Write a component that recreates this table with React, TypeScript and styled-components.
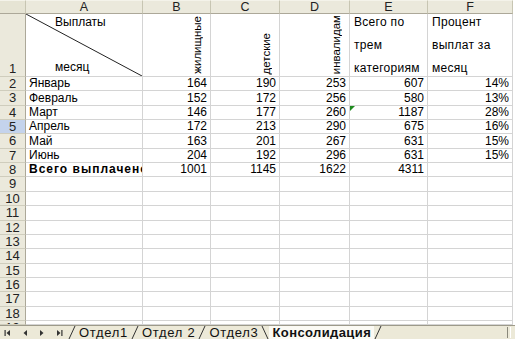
import React from "react";
import styled, { createGlobalStyle, css } from "styled-components";

const Global = createGlobalStyle`
  html, body { margin: 0; padding: 0; background: #ffffff; }
  body { font-family: "Liberation Sans", Arial, sans-serif; }
`;

const Window = styled.div`
  width: 515px;
  height: 339px;
  display: flex;
  flex-direction: column;
  overflow: hidden;
  background: #ffffff;
`;

const rowTops = Array.from({ length: 19 }, (_, i) => 77 + Math.round(i * 14.35));
const rowHeights = rowTops.slice(0, 18).map((t, i) => rowTops[i + 1] - t);
rowHeights[17] = 325 - rowTops[17];

const Sheet = styled.div<{ $rows: string }>`
  display: grid;
  grid-template-columns: 26px 117px 68px 69px 70px 78px 85px 2px;
  grid-template-rows: ${(p) => p.$rows};
  height: 325px;
  overflow: hidden;
  font-size: 12px;
  color: #000;
`;

const ColHead = styled.div<{ $corner?: boolean }>`
  background: #ebe9dc;
  border-right: 1px solid #c7c5b2;
  border-bottom: 1px solid #aca899;
  border-top: 1px solid #f4f3ea;
  box-sizing: border-box;
  display: flex;
  align-items: center;
  justify-content: center;
  font-size: 12.5px;
  color: #222;
  ${(p) => p.$corner && css`background: #e6e4d4;`}
`;

const RowHead = styled.div<{ $selected?: boolean; $bottom?: boolean }>`
  background: ${(p) => (p.$selected ? "#c4d3ec" : "#ebe9dc")};
  border-right: 1px solid #aca899;
  border-bottom: 1px solid #cfcdbd;
  box-sizing: border-box;
  display: flex;
  align-items: ${(p) => (p.$bottom ? "flex-end" : "flex-start")};
  justify-content: center;
  overflow: hidden;
  font-size: 13px;
  color: #222;
  padding: ${(p) => (p.$bottom ? "0 0 1px 0" : "1px 0 0 0")};
  line-height: 12px;
`;

const Cell = styled.div<{ $align?: "left" | "right"; $bold?: boolean }>`
  position: relative;
  border-right: 1px solid #d4d4d4;
  border-bottom: 1px solid #d4d4d4;
  box-sizing: border-box;
  display: flex;
  align-items: center;
  justify-content: ${(p) => (p.$align === "right" ? "flex-end" : "flex-start")};
  padding: 0 3px 0 3px;
  white-space: nowrap;
  overflow: hidden;
  font-weight: ${(p) => (p.$bold ? "bold" : "normal")};
  letter-spacing: ${(p) => (p.$bold ? "1px" : "0")};
  line-height: 13px;
`;

const Edge = styled.div`
  background: #ffffff;
`;

const DiagCell = styled(Cell)`
  display: block;
  padding: 0;
`;

const DiagSvg = styled.svg`
  position: absolute;
  inset: 0;
`;

const DiagTop = styled.span`
  position: absolute;
  left: 29px;
  top: 2px;
`;

const DiagBottom = styled.span`
  position: absolute;
  left: 29px;
  bottom: 2px;
`;

const VertCell = styled(Cell)`
  align-items: flex-end;
  justify-content: flex-end;
  padding: 0 7px 2px 0;
`;

const VertText = styled.span`
  writing-mode: vertical-rl;
  transform: rotate(180deg);
  line-height: 12px;
  font-size: 11.5px;
`;

const StackCell = styled(Cell)`
  flex-direction: column;
  align-items: flex-start;
  justify-content: space-between;
  padding: 2px 3px 1px 4px;
  letter-spacing: 0.3px;
`;

const Marker = styled.span`
  position: absolute;
  left: 0;
  top: 0;
  width: 0;
  height: 0;
  border-top: 5px solid #1f8a1f;
  border-right: 5px solid transparent;
`;

const TabBar = styled.div`
  height: 14px;
  display: flex;
  align-items: center;
  background: #ece9d8;
  border-top: 1px solid #9d9a8a;
  box-sizing: border-box;
  font-size: 13px;
  position: relative;
`;

const NavGroup = styled.div`
  display: flex;
  align-items: center;
  gap: 9px;
  padding-left: 4px;
  width: 64px;
  flex: none;
`;

const Tabs = styled.div`
  display: flex;
  align-items: center;
  height: 100%;
`;

const Tab = styled.div<{ $active?: boolean }>`
  display: flex;
  align-items: center;
  height: 100%;
  padding: 0 3px;
  font-weight: ${(p) => (p.$active ? "bold" : "normal")};
  background: ${(p) => (p.$active ? "#fbfaf4" : "transparent")};
  letter-spacing: ${(p) => (p.$active ? "0.4px" : "0.7px")};
  color: #111;
  line-height: 12px;
  white-space: nowrap;
`;

const Slant = styled.svg`
  display: block;
  flex: none;
`;

const SplitBar = styled.div`
  margin-left: auto;
  margin-right: 4px;
  width: 2px;
  height: 11px;
  border-left: 1px solid #8a887a;
  border-right: 1px solid #ffffff;
`;

const Nav = ({ kind }: { kind: "first" | "prev" | "next" | "last" }) => {
  const left = kind === "first" || kind === "prev";
  const bar = kind === "first" || kind === "last";
  return (
    <svg width="8" height="8" viewBox="0 0 8 8">
      {left ? <polygon points="6,1 6,7 2.5,4" fill="#333" /> : <polygon points="2,1 2,7 5.5,4" fill="#333" />}
      {bar && (left ? <rect x="0.5" y="1" width="1.2" height="6" fill="#333" /> : <rect x="6.3" y="1" width="1.2" height="6" fill="#333" />)}
    </svg>
  );
};

const SlantLine = ({ back }: { back?: boolean }) => (
  <Slant width="8" height="13" viewBox="0 0 8 13">
    {back ? (
      <line x1="1" y1="0" x2="7" y2="13" stroke="#333" strokeWidth="1" />
    ) : (
      <line x1="7" y1="0" x2="1" y2="13" stroke="#333" strokeWidth="1" />
    )}
  </Slant>
);

type Row = { n: number; month: string; b: number; c: number; d: number; e: number; f?: string; bold?: boolean; mark?: boolean };

const data: Row[] = [
  { n: 2, month: "Январь", b: 164, c: 190, d: 253, e: 607, f: "14%" },
  { n: 3, month: "Февраль", b: 152, c: 172, d: 256, e: 580, f: "13%" },
  { n: 4, month: "Март", b: 146, c: 177, d: 260, e: 1187, f: "28%", mark: true },
  { n: 5, month: "Апрель", b: 172, c: 213, d: 290, e: 675, f: "16%" },
  { n: 6, month: "Май", b: 163, c: 201, d: 267, e: 631, f: "15%" },
  { n: 7, month: "Июнь", b: 204, c: 192, d: 296, e: 631, f: "15%" },
  { n: 8, month: "Всего выплачено", b: 1001, c: 1145, d: 1622, e: 4311, bold: true },
];

export default function App() {
  const rows = `14px 63px ${rowHeights.map((h) => `${h}px`).join(" ")}`;
  const empty = Array.from({ length: 11 }, (_, i) => i + 9);
  return (
    <Window>
      <Global />
      <Sheet $rows={rows}>
        <ColHead $corner />
        {["A", "B", "C", "D", "E", "F"].map((l) => (
          <ColHead key={l}>{l}</ColHead>
        ))}
        <Edge />

        <RowHead $bottom>1</RowHead>
        <DiagCell>
          <DiagSvg width="117" height="63" viewBox="0 0 117 63" preserveAspectRatio="none">
            <line x1="0" y1="0" x2="116" y2="62" stroke="#222" strokeWidth="1" />
          </DiagSvg>
          <DiagTop>Выплаты</DiagTop>
          <DiagBottom>месяц</DiagBottom>
        </DiagCell>
        <VertCell>
          <VertText>жилищные</VertText>
        </VertCell>
        <VertCell>
          <VertText>детские</VertText>
        </VertCell>
        <VertCell>
          <VertText>инвалидам</VertText>
        </VertCell>
        <StackCell>
          <span>Всего по</span>
          <span>трем</span>
          <span>категориям</span>
        </StackCell>
        <StackCell>
          <span>Процент</span>
          <span>выплат за</span>
          <span>месяц</span>
        </StackCell>
        <Edge />

        {data.map((r) => (
          <React.Fragment key={r.n}>
            <RowHead $selected={r.n === 5}>{r.n}</RowHead>
            <Cell $bold={r.bold}>{r.month}</Cell>
            <Cell $align="right">{r.b}</Cell>
            <Cell $align="right">{r.c}</Cell>
            <Cell $align="right">{r.d}</Cell>
            <Cell $align="right">
              {r.mark && <Marker />}
              {r.e}
            </Cell>
            <Cell $align="right">{r.f ?? ""}</Cell>
            <Edge />
          </React.Fragment>
        ))}

        {empty.map((n) => (
          <React.Fragment key={n}>
            <RowHead>{n}</RowHead>
            <Cell />
            <Cell />
            <Cell />
            <Cell />
            <Cell />
            <Cell />
            <Edge />
          </React.Fragment>
        ))}
      </Sheet>
      <TabBar>
        <NavGroup>
          <Nav kind="first" />
          <Nav kind="prev" />
          <Nav kind="next" />
          <Nav kind="last" />
        </NavGroup>
        <Tabs>
          <SlantLine />
          <Tab>Отдел1</Tab>
          <SlantLine />
          <Tab>Отдел 2</Tab>
          <SlantLine />
          <Tab>Отдел3</Tab>
          <SlantLine back />
          <Tab $active>Консолидация</Tab>
          <SlantLine />
        </Tabs>
        <SplitBar />
      </TabBar>
    </Window>
  );
}
